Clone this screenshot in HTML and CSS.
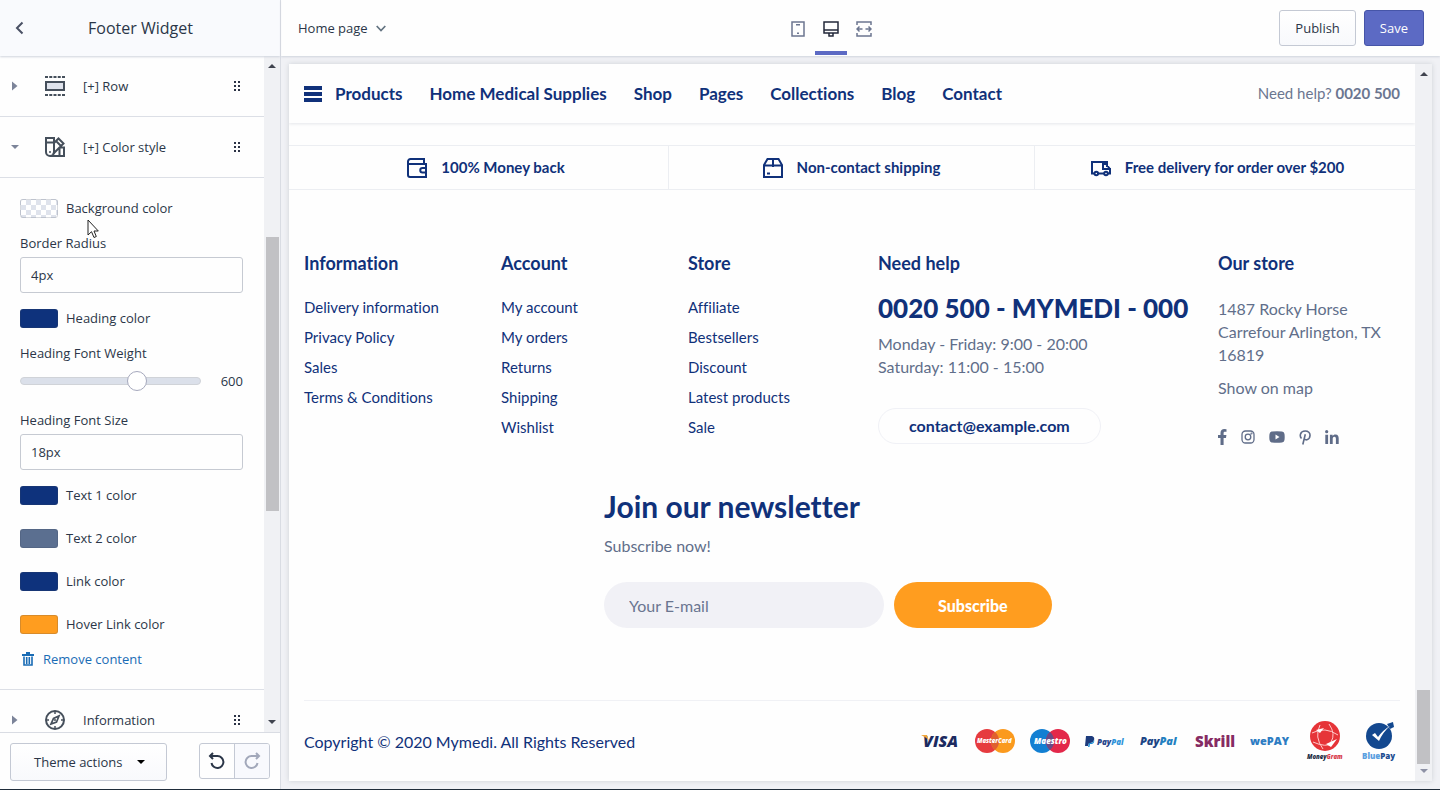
FILE: index.html
```
<!DOCTYPE html>
<html lang="en">

	<head>
		<meta charset="utf-8">
		<meta name="viewport" content="width=device-width, initial-scale=1">
		<title>Footer Widget</title>
		<link rel="stylesheet" href="styles.css">
	</head>

	<body>

		<!-- shared icons -->
		<svg class="defs" aria-hidden="true">
			<symbol id="drag" viewBox="0 0 8 12">
				<path d="M1 1h2v2H1zM5 1h2v2H5zM1 5h2v2H1zM5 5h2v2H5zM1 9h2v2H1zM5 9h2v2H5z"/>
			</symbol>
			<symbol id="right" viewBox="0 0 6 10"><path d="M0 0.500L5.500 5L0 9.500z"/></symbol>
			<symbol id="down" viewBox="0 0 10 6"><path d="M1 1h8L5 5z"/></symbol>
			<symbol id="up" viewBox="0 0 10 6"><path d="M1 5h8L5 1z"/></symbol>
		</svg>

		<aside class="sidebar">

			<header class="side-head">
				<button type="button" class="back" aria-label="Back">
					<svg width="9" height="14" viewBox="0 0 9 14"><path d="M7.500 1.500L2 7l5.500 5.500" fill="none" stroke="currentColor" stroke-width="2"/></svg>
				</button>
				<h1>Footer Widget</h1>
			</header>

			<div class="side-body">

				<div class="list">

					<div class="item">
						<svg class="caret" width="6" height="10"><use href="#right"/></svg>
						<svg class="ico" viewBox="0 0 20 20">
							<path d="M1 6h18v8H1z" fill="#dfe3ec" stroke="#454f5b" stroke-width="2"/>
							<path d="M0 1h20M0 19h20" stroke="#454f5b" stroke-width="2" stroke-dasharray="3 1.250"/>
						</svg>
						<span>[+] Row</span>
						<svg class="drag" width="8" height="12"><use href="#drag"/></svg>
					</div>

					<div class="item">
						<svg class="caret" width="10" height="6"><use href="#down"/></svg>
						<svg class="ico" viewBox="0 0 20 20" fill="none" stroke="#454f5b" stroke-width="2">
							<path d="M1 1h8v14a4 4 0 0 1-8 0zM1 5.500h8"/>
							<path d="M9 6l4.500-4.500L18.500 6.500L8 17M5 19h14v-8.500h-4.500M14.500 11v8M11 4l5 5"/>
							<circle cx="5" cy="15" r="1" fill="#454f5b" stroke="none"/>
						</svg>
						<span>[+] Color style</span>
						<svg class="drag" width="8" height="12"><use href="#drag"/></svg>
					</div>

					<form class="panel" action="javascript:void(0);">
						<button type="button" class="color"><i class="swatch none"></i>Background color</button>
						<label class="label" for="radius">Border Radius</label>
						<input class="text" id="radius" type="text" value="4px">
						<button type="button" class="color"><i class="swatch navy"></i>Heading color</button>
						<label class="label" for="weight">Heading Font Weight</label>
						<div class="range">
							<input id="weight" type="range" min="0" max="900" step="100" value="600">
							<output for="weight">600</output>
						</div>
						<label class="label" for="size">Heading Font Size</label>
						<input class="text" id="size" type="text" value="18px">
						<button type="button" class="color"><i class="swatch navy"></i>Text 1 color</button>
						<button type="button" class="color next"><i class="swatch slate"></i>Text 2 color</button>
						<button type="button" class="color next"><i class="swatch navy"></i>Link color</button>
						<button type="button" class="color next"><i class="swatch orange"></i>Hover Link color</button>
						<button type="button" class="remove">
							<svg width="16" height="16" viewBox="0 0 16 16">
								<path d="M6 1h4v2h4v2H2V3h4z" fill="currentColor"/>
								<path d="M4 5.500v8.500h8V5.500M6.700 6v7M9.300 6v7" fill="none" stroke="currentColor" stroke-width="1.600"/>
							</svg>
							Remove content
						</button>
					</form>

					<div class="item">
						<svg class="caret" width="6" height="10"><use href="#right"/></svg>
						<svg class="ico" viewBox="0 0 20 20" fill="none" stroke="#454f5b" stroke-width="2">
							<circle cx="10" cy="10" r="9"/>
							<path d="M10 1v3M10 16v3M1 10h3M16 10h3" stroke-width="1.500"/>
							<path d="M14 6l-2.500 6L6 14l2.500-5.500z" stroke-width="1.700"/>
							<circle cx="10" cy="10" r="1" fill="#454f5b" stroke="none"/>
						</svg>
						<span>Information</span>
						<svg class="drag" width="8" height="12"><use href="#drag"/></svg>
					</div>

				</div>

				<div class="bar side-bar">
					<svg width="10" height="6"><use href="#up"/></svg>
					<i class="thumb"></i>
					<svg width="10" height="6"><use href="#down"/></svg>
				</div>

			</div>

			<footer class="side-foot">
				<button type="button" class="btn theme">Theme actions <svg width="10" height="6"><use href="#down"/></svg></button>
				<div class="history">
					<button type="button" aria-label="Undo">
						<svg width="18" height="18" viewBox="0 0 18 18" fill="none" stroke="currentColor" stroke-width="2"><path d="M2 4h7.500a6 6 0 1 1-6 7M5 1L2 4l3 3"/></svg>
					</button>
					<button type="button" aria-label="Redo" disabled>
						<svg width="18" height="18" viewBox="0 0 18 18" fill="none" stroke="currentColor" stroke-width="2"><path d="M16 4H8.500a6 6 0 1 0 6 7M13 1l3 3l-3 3"/></svg>
					</button>
				</div>
			</footer>

		</aside>

		<main class="main">

			<header class="topbar">
				<button type="button" class="page">Home page
					<svg width="10" height="7" viewBox="0 0 10 7"><path d="M0.700 1L5 5.500L9.300 1" fill="none" stroke="#637381" stroke-width="1.700"/></svg>
				</button>
				<div class="devices">
					<button type="button" aria-label="Mobile">
						<svg width="16" height="16" viewBox="0 0 16 16"><path d="M2 1h12v14H2z" fill="none" stroke="currentColor" stroke-width="1.500"/><path d="M6 3h4v1.500H6zM7 11.500h2V13H7z" fill="currentColor"/></svg>
					</button>
					<button type="button" class="on" aria-label="Desktop">
						<svg width="16" height="16" viewBox="0 0 16 16" fill="none" stroke="currentColor" stroke-width="1.500"><path d="M1 1h14v11H1zM1 9h14M6 12v3h4v-3"/></svg>
					</button>
					<button type="button" aria-label="Full width">
						<svg width="16" height="16" viewBox="0 0 16 16" fill="none" stroke="currentColor" stroke-width="1.500"><path d="M1 4V1h14v3M1 12v3h14v-3M1 8h5.500M9.500 8H15M3.500 5.500L1 8l2.500 2.500M12.500 5.500L15 8l-2.500 2.500"/></svg>
					</button>
				</div>
				<div class="actions">
					<button type="button" class="btn">Publish</button>
					<button type="button" class="btn primary">Save</button>
				</div>
			</header>

			<div class="stage">
				<div class="frame">

					<div class="site">

						<nav class="nav">
							<a href="#" class="products">
								<svg width="18" height="16" viewBox="0 0 18 16"><path d="M0 0h18v4H0zM0 6h18v4H0zM0 12h18v4H0z" fill="currentColor"/></svg>
								Products
							</a>
							<a href="#">Home Medical Supplies</a>
							<a href="#">Shop</a>
							<a href="#">Pages</a>
							<a href="#">Collections</a>
							<a href="#">Blog</a>
							<a href="#">Contact</a>
							<p>Need help? <b>0020 500</b></p>
						</nav>

						<ul class="perks">
							<li>
								<svg width="20" height="20" viewBox="0 0 20 20" fill="none" stroke="currentColor" stroke-width="2"><path d="M17 5V1H3.500A2.500 2.500 0 0 0 1 3.500V17a2 2 0 0 0 2 2h16V6H2M19 10h-3.500a2 2 0 0 0 0 4.500H19"/></svg>
								100% Money back
							</li>
							<li>
								<svg width="20" height="20" viewBox="0 0 20 20" fill="none" stroke="currentColor" stroke-width="2"><path d="M1 7l3.500-6h11L19 7v12H1zM1 7.500h18M10 1v8M4 15.500h3"/></svg>
								Non-contact shipping
							</li>
							<li>
								<svg width="20" height="20" viewBox="0 0 20 20" fill="none" stroke="currentColor" stroke-width="2"><path d="M3 15.500H1V4h15v5M16 6h-4v5h7v4.500h-2M7.500 15.500H13M15 6l4 5"/><circle cx="5.300" cy="15.500" r="1.800"/><circle cx="15" cy="15.500" r="1.800"/></svg>
								Free delivery for order over $200
							</li>
						</ul>

						<footer class="foot">

							<section>
								<h2>Information</h2>
								<ul>
									<li><a href="#">Delivery information</a></li>
									<li><a href="#">Privacy Policy</a></li>
									<li><a href="#">Sales</a></li>
									<li><a href="#">Terms &amp; Conditions</a></li>
								</ul>
							</section>

							<section>
								<h2>Account</h2>
								<ul>
									<li><a href="#">My account</a></li>
									<li><a href="#">My orders</a></li>
									<li><a href="#">Returns</a></li>
									<li><a href="#">Shipping</a></li>
									<li><a href="#">Wishlist</a></li>
								</ul>
							</section>

							<section>
								<h2>Store</h2>
								<ul>
									<li><a href="#">Affiliate</a></li>
									<li><a href="#">Bestsellers</a></li>
									<li><a href="#">Discount</a></li>
									<li><a href="#">Latest products</a></li>
									<li><a href="#">Sale</a></li>
								</ul>
							</section>

							<section>
								<h2>Need help</h2>
								<p class="phone">0020 500 - MYMEDI - 000</p>
								<p>Monday - Friday: 9:00 - 20:00<br>Saturday: 11:00 - 15:00</p>
								<a class="mail" href="mailto:contact@example.com">contact@example.com</a>
							</section>

							<section>
								<h2>Our store</h2>
								<p class="address">1487 Rocky Horse Carrefour Arlington, TX 16819</p>
								<a class="map" href="#">Show on map</a>
								<div class="social">
									<a href="#" aria-label="Facebook"><svg width="9" height="16" viewBox="0 0 9 16"><path d="M2.500 16V9H0V6h2.500V4C2.500 1.400 4 0 6.300 0L8.500.2v2.600H7C5.900 2.800 5.600 3.400 5.600 4v2h2.800L8 9H5.600v7z"/></svg></a>
									<a href="#" aria-label="Instagram"><svg width="14" height="14" viewBox="0 0 14 14" fill="none" stroke="currentColor" stroke-width="1.300"><rect x="1" y="1" width="12" height="12" rx="3.500"/><circle cx="7" cy="7" r="2.800"/><circle cx="10.500" cy="3.500" r=".4"/></svg></a>
									<a href="#" aria-label="YouTube"><svg width="16" height="12" viewBox="0 0 16 12"><path fill-rule="evenodd" d="M3 .5Q8 0 13 .5Q15.200.7 15.500 3q.4 3 0 6q-.3 2.300-2.500 2.500q-5 .5-10 0Q.8 11.300.5 9q-.4-3 0-6Q.8.700 3 .5zM6.500 3.500v5l4-2.500z"/></svg></a>
									<a href="#" aria-label="Pinterest"><svg width="12" height="15" viewBox="0 0 12 15" fill="none" stroke="currentColor" stroke-width="1.600"><path d="M2.500 8.500C.5 6.500.7 1 6.200 1c3 0 5 1.800 4.800 4.500C10.700 10 6.500 10.800 5.300 8.500M6.300 4.300L3.800 14.500"/></svg></a>
									<a href="#" aria-label="LinkedIn"><svg width="14" height="14" viewBox="0 0 14 14"><path d="M.3 4.700h2.800V14H.3zM4.900 4.700h2.700v1.300c.5-.9 1.500-1.500 2.800-1.500 2.700 0 3.300 1.800 3.300 4V14h-2.800V9.100c0-1.200-.1-2.300-1.500-2.300S7.700 7.900 7.700 9v5H4.900z"/><circle cx="1.700" cy="1.700" r="1.600"/></svg></a>
								</div>
							</section>

						</footer>

						<div class="join">
							<form action="javascript:void(0);">
								<h2>Join our newsletter</h2>
								<p>Subscribe now!</p>
								<div class="fields">
									<input type="email" placeholder="Your E-mail" aria-label="Your E-mail">
									<button type="button">Subscribe</button>
								</div>
							</form>
						</div>

						<div class="legal">
							<p>Copyright © 2020 Mymedi. All Rights Reserved</p>
							<div class="cards">
								<svg viewBox="0 0 40 40"><text x="3" y="26" class="logo" font-size="16" fill="#1c2a60">VISA</text><path d="M1 14h6l2 6q-3-4-8-6z" fill="#f0a53a"/></svg>
								<svg viewBox="0 0 40 40"><circle cx="12" cy="20" r="12" fill="#e63b3f"/><circle cx="28" cy="20" r="12" fill="#fb9a1e"/><path d="M20 11a12 12 0 0 1 0 18a12 12 0 0 1 0-18z" fill="#e0602f"/><text x="2" y="22" class="logo" font-size="6" fill="#fff">MasterCard</text></svg>
								<svg viewBox="0 0 40 40"><circle cx="12" cy="20" r="12" fill="#127fd2"/><circle cx="28" cy="20" r="12" fill="#e3284a"/><path d="M20 11a12 12 0 0 1 0 18a12 12 0 0 1 0-18z" fill="#6a4a86"/><text x="4" y="23" class="logo" font-size="8" fill="#fff">Maestro</text></svg>
								<svg viewBox="0 0 40 40"><path d="M1 15h6q3 1 2 4t-4 3H4l-1 3H0z" fill="#1d3b7c"/><path d="M4 22h2q3-1 3-4 1 4-2 5H5l-.5 3H3z" fill="#1c8fd6"/><text x="12" y="24" class="logo" font-size="8" fill="#27458a">Pay<tspan fill="#2f94da">Pal</tspan></text></svg>
								<svg viewBox="0 0 40 40"><text x="0" y="24" class="logo" font-size="11" fill="#1c4585">Pay<tspan fill="#2380c0">Pal</tspan></text></svg>
								<svg viewBox="0 0 40 40"><text x="0" y="26" class="logo skrill" font-size="15" fill="#862b63">Skrill</text></svg>
								<svg viewBox="0 0 40 40"><text x="0" y="24" class="logo wepay" font-size="11" fill="#2d7cc2">wePAY</text></svg>
								<svg viewBox="0 0 40 40"><circle cx="20" cy="15" r="15" fill="#e63438"/><path d="M7 12q13-7 26 2M8 21q13 6 20 1M15 4q-6 12 3 24M24 3q7 10 2 18" fill="none" stroke="#ffc9c9"/><path d="M21 23l11-5-6 8zM11 9l8-2-4 5z" fill="#fff"/><text x="2" y="38" class="logo" font-size="6" fill="#222c44">Money<tspan fill="#d83a4a">Gram</tspan></text></svg>
								<svg viewBox="0 0 40 40"><circle cx="19" cy="15" r="13" fill="#13488f"/><path d="M27 3l6-2 1 5-4 2z" fill="#13488f"/><path d="M12 14l3-2 3 4q5-7 12-11q-7 6-11 15z" fill="#fff"/><text x="2" y="38" class="logo blue" font-size="8" fill="#5a9fe0">Blue<tspan fill="#1b4c91">Pay</tspan></text></svg>
							</div>
						</div>

					</div>

					<div class="bar site-bar">
						<svg width="10" height="6"><use href="#up"/></svg>
						<i class="thumb"></i>
						<svg width="10" height="6"><use href="#down"/></svg>
					</div>

				</div>
			</div>

		</main>

		<svg class="cursor" width="12" height="20" viewBox="0 0 12 20"><path d="M1 1v15l3.500-3.300L7 18.500l2.300-1L7 12h4.300z" fill="#fff" stroke="#222" stroke-width="1"/></svg>

	</body>

</html>
```
FILE: styles.css
```
* { box-sizing:border-box; }

body { margin:0; height:100vh; display:flex; overflow:hidden; background-color:#fefefe; border-bottom:1px solid #1f2c3a; font:13px/20px "Open Sans", "Noto Sans", sans-serif; color:#2b3648; }
h1, h2, p, ul { margin:0; padding:0; }
ul { list-style:none; }
a { color:inherit; text-decoration:none; }
button { margin:0; padding:0; border:0; background:none; font:inherit; color:inherit; cursor:pointer; }
svg { flex:none; display:block; }
.defs { position:absolute; width:0; height:0; }
.cursor { position:absolute; left:87px; top:219px; }

/* sidebar */
.sidebar { flex:none; width:281px; display:flex; flex-direction:column; border-right:1px solid #d9dce3; }
.side-head { flex:none; height:56px; display:flex; align-items:center; padding:0 15px; background-color:#f9fafd; box-shadow:0 1px 2px #cfd4dc; position:relative; }
.side-head h1 { flex:1; text-align:center; font-size:16px; font-weight:500; padding-right:8px; }
.back { color:#4a5064; }

.side-body { flex:1; min-height:0; display:flex; }
.list { flex:1; overflow:hidden; }
.item { height:61px; display:grid; grid-template-columns:14px 20px 1fr 8px; column-gap:18px; align-items:center; padding:0 23px 0 8px; border-bottom:1px solid #dcdfe6; }
.item .caret { fill:#7c8499; justify-self:center; }
.item .ico { width:20px; height:20px; margin-left:5px; }
.item span { padding-left:5px; }
.drag { fill:#2b3245; }

.panel { display:flex; flex-direction:column; padding:20px 21px 20px 20px; border-bottom:1px solid #dcdfe6; }
.color { height:20px; display:flex; align-items:center; gap:8px; text-align:left; }
.color.next { margin-top:23px; }
.swatch { width:38px; height:19px; border-radius:3px; border:1px solid rgba(60, 70, 90, 0.2); }
.swatch.navy { background-color:#0e327c; }
.swatch.slate { background-color:#5b6f90; }
.swatch.orange { background-color:#ff9d1f; }
.swatch.none { background:repeating-conic-gradient(#dfe3ec 0 25%, #fff 0 50%) 0 0/10px 10px; }
.label { margin-top:15px; }
.text { height:36px; margin:4px 0 15px; padding:0 10px; border:1px solid #c6cad2; border-radius:3px; background-color:#fefefe; font:inherit; color:inherit; }
.range { height:20px; margin:8px 0 4px; display:flex; align-items:center; gap:20px; }
.range input { flex:1; min-width:0; height:20px; margin:0; appearance:none; background:none; }
.range input::-webkit-slider-runnable-track { height:8px; border-radius:4px; background-color:#dbe0ea; border:1px solid #d0d3d8; }
.range input::-webkit-slider-thumb { appearance:none; width:20px; height:20px; margin-top:-7px; border-radius:50%; background-color:#fff; border:1px solid #a6a9bd; }
.remove { height:20px; margin-top:15px; display:flex; align-items:center; gap:7px; color:#1a6cb5; }

.side-foot { flex:none; height:57px; display:flex; justify-content:space-between; align-items:flex-start; padding:10px; border-top:1px solid #d9dce3; background-color:#fefefe; }
.btn { height:36px; display:flex; align-items:center; padding:0 15px; border:1px solid #c4c9d4; border-radius:3px; background:linear-gradient(#fff, #f8f9fc); }
.theme { height:38px; padding:0 20px 0 23px; gap:13px; }
.history { display:flex; border:1px solid #c4c9d4; border-radius:3px; overflow:hidden; }
.history button { width:34px; height:34px; display:flex; align-items:center; justify-content:center; }
.history button + button { width:35px; border-left:1px solid #c4c9d4; background-color:#f8f9fd; color:#a2a8ba; }

/* scrollbars */
.bar { flex:none; width:17px; display:flex; flex-direction:column; align-items:center; padding:7px 0; background-color:#f0f1f4; fill:#40444f; }
.bar .thumb { width:13px; background-color:#c1c1c4; }
.bar::before, .bar::after { content:""; }
.bar::before { order:1; }
.bar svg:first-of-type { order:0; }
.bar .thumb { order:2; }
.bar::after { order:3; }
.bar svg:last-of-type { order:4; }
.side-bar { width:16px; }
.side-bar::before { flex:168; }
.side-bar .thumb { flex:274; }
.side-bar::after { flex:208; }
.site-bar::before { flex:613; }
.site-bar .thumb { flex:74; }
.site-bar::after { flex:4; }
.site-bar svg:last-of-type { fill:#8d91a5; }

/* editor */
.main { flex:1; min-width:0; display:flex; flex-direction:column; }
.topbar { flex:none; height:56px; display:grid; grid-template-columns:1fr auto 1fr; padding:0 16px 0 17px; box-shadow:0 1px 2px #cfd4dc; position:relative; }
.page { justify-self:start; display:flex; align-items:center; gap:8px; }
.devices { display:flex; gap:1px; color:#6c7690; padding-right:60px; }
.devices button { width:32px; height:55px; display:flex; align-items:center; justify-content:center; padding-top:6px; border-bottom:4px solid transparent; }
.devices .on { color:#23283a; border-color:#5c6ac4; }
.actions { display:flex; align-items:center; justify-content:flex-end; gap:8px; }
.btn.primary { background:#5c6ac4; border-color:#4655a8; color:#fff; }

.stage { flex:1; min-height:0; padding:8px; background-color:#f0f1f5; }
.frame { height:100%; display:flex; background-color:#fefefe; box-shadow:0 0 5px #cdd0d6; }
.site { flex:1; min-width:0; display:flex; flex-direction:column; font:16px/23px Lato, "Open Sans", sans-serif; font-variant-ligatures:none; color:#616e8a; overflow:hidden; }

.nav { height:59px; display:flex; align-items:center; gap:27px; padding:0 15px; font-size:17px; color:#10317a; font-weight:700; box-shadow:0 1px 3px #e4e6ea; }
.products { display:flex; align-items:center; gap:13px; }
.nav p { margin-left:auto; font-size:15px; font-weight:400; color:#6b7690; }

.perks { margin-top:22px; display:grid; grid-template-columns:379fr 366fr 381fr; border:solid #eceef2; border-width:1px 0; font-size:15px; font-weight:700; color:#10317a; }
.perks li { height:43px; display:flex; align-items:center; justify-content:center; gap:14px; }
.perks li + li { border-left:1px solid #eceef2; }
.perks li:first-child { padding-left:15px; }
.perks li:last-child { padding-right:15px; }

.foot { display:grid; grid-template-columns:197fr 187fr 190fr 340fr 182fr; padding:62px 15px 0; }
.foot h2 { font-size:18px; line-height:23px; color:#10317a; }
.foot ul { padding-top:17px; font-size:15px; color:#10317a; }
.foot li { line-height:30px; }
.phone { padding:16px 0 7px; font-size:26px; line-height:34px; font-weight:900; color:#10317a; white-space:nowrap; }
.mail { display:inline-block; margin-top:30px; padding:5px 30px 6px; border:1px solid #f0f1f6; border-radius:18px; font-weight:700; color:#10317a; }
.address { padding:22px 0 10px; }
.social { display:flex; align-items:center; gap:14px; height:16px; margin-top:30px; color:#5f6c88; fill:currentColor; }

.join { display:grid; grid-template-columns:315fr 811fr; padding-top:40px; }
.join form { grid-column:2; }
.join h2 { font-size:30px; line-height:42px; color:#10317a; }
.join p { padding-top:7px; }
.fields { display:flex; gap:10px; margin-top:25px; }
.fields input { width:280px; height:46px; padding:0 25px; border:0; border-radius:23px; background-color:#f1f1f6; font:inherit; color:#616e8a; }
.fields input::placeholder { color:#6a7590; }
.fields button { padding:0 44px; border-radius:23px; background-color:#ff9d1f; color:#fff; font-weight:900; }

.legal { flex:1; margin:auto 15px 0; max-height:81px; display:flex; align-items:center; justify-content:space-between; border-top:1px solid #f0f1f5; color:#10317a; }
.cards { display:flex; gap:15px; }
.cards svg { width:40px; height:40px; }
.logo { font-family:"Open Sans", sans-serif; font-weight:800; font-style:italic; }
.skrill, .wepay, .blue { font-style:normal; }
```
